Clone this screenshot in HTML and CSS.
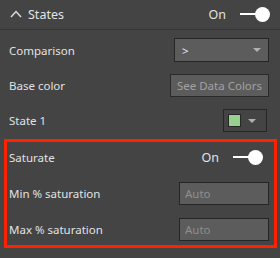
FILE: index.html
```html
<!DOCTYPE html>
<html lang="en">
<head>
    <meta charset="UTF-8">
    <title>States</title>
    <link rel="stylesheet" href="styles.css">
</head>
<body>
    <div class="panel">
        <div class="header">
            <div class="header-title">
                <svg class="caret" width="12" height="8" viewBox="0 0 12 8">
                    <path d="M1 7 L6 1.5 L11 7" fill="none" stroke="#e0e0e0" stroke-width="1.4"/>
                </svg>
                <span>States</span>
            </div>
            <div class="toggle">
                <span class="toggle-label">On</span>
                <span class="toggle-track"></span>
                <span class="toggle-knob"></span>
            </div>
        </div>

        <div class="row row-first">
            <span class="label">Comparison</span>
            <div class="select">
                <span>&gt;</span>
                <span class="arrow"></span>
            </div>
        </div>

        <div class="row row-short">
            <span class="label">Base color</span>
            <button class="btn">See Data Colors</button>
        </div>

        <div class="row row-short">
            <span class="label">State 1</span>
            <div class="picker">
                <span class="swatch"></span>
                <span class="arrow"></span>
            </div>
        </div>

        <div class="highlight">
            <div class="row row-tight">
                <span class="label">Saturate</span>
                <div class="toggle toggle-inner">
                    <span class="toggle-label">On</span>
                    <span class="toggle-track"></span>
                    <span class="toggle-knob"></span>
                </div>
            </div>
            <div class="row row-tight">
                <span class="label">Min % saturation</span>
                <input class="field" type="text" placeholder="Auto">
            </div>
            <div class="row row-tight">
                <span class="label">Max % saturation</span>
                <input class="field" type="text" placeholder="Auto">
            </div>
        </div>
    </div>
</body>
</html>
```

FILE: styles.css
```css
* {
    box-sizing: border-box;
    margin: 0;
    padding: 0;
}

body {
    background-color: #444444;
    color: #e2e2e2;
    font-family: 'Noto Sans', 'Open Sans', sans-serif;
    font-size: 11.5px;
    width: 280px;
    height: 258px;
    overflow: hidden;
}

.header {
    height: 30px;
    border-bottom: 1px solid #363636;
    display: flex;
    align-items: center;
    justify-content: space-between;
    padding: 0 10px 1px 10px;
}

.header-title {
    display: flex;
    align-items: center;
    gap: 6px;
    font-size: 12.5px;
}

.caret {
    display: block;
}

.toggle {
    display: flex;
    align-items: center;
}

.toggle-label {
    font-size: 12.5px;
    margin-right: 14px;
}

.toggle-track {
    width: 17px;
    height: 2px;
    background-color: #ffffff;
}

.toggle-knob {
    width: 15px;
    height: 15px;
    border-radius: 50%;
    background-color: #ffffff;
    margin-left: -2px;
}

.row {
    height: 36px;
    display: flex;
    align-items: center;
    justify-content: space-between;
    padding: 0 11px 0 9px;
}

.row-first {
    margin-top: 2px;
}

.row-short {
    height: 35px;
}

.select {
    width: 95px;
    height: 24px;
    background-color: #5c5c5c;
    border: 1px solid #262626;
    display: flex;
    align-items: center;
    justify-content: space-between;
    padding: 0 7px 0 7px;
    color: #eeeeee;
}

.arrow {
    width: 0;
    height: 0;
    border-left: 4px solid transparent;
    border-right: 4px solid transparent;
    border-top: 4px solid #b0b0b0;
}

.btn {
    width: 99px;
    height: 23px;
    background-color: #5c5c5c;
    border: 1px solid #2a2a2a;
    color: #a2a2a2;
    font-family: inherit;
    font-size: 11.5px;
    padding: 0;
}

.picker {
    width: 44px;
    height: 23px;
    border: 1px solid #262626;
    display: flex;
    align-items: center;
    gap: 7px;
    padding-left: 4px;
    margin-right: 2px;
}

.swatch {
    width: 13px;
    height: 13px;
    background-color: #98d08f;
    border: 1px solid #262626;
}

.highlight {
    margin: 2px 3px 0 4px;
    height: 109px;
    outline: 3px solid #ff2200;
    outline-offset: -3px;
}

.row-tight {
    padding: 0 0 0 5px;
}

.row-tight:first-child {
    margin-top: -1px;
}

.toggle-inner {
    margin-right: 14px;
}

.field {
    width: 90px;
    height: 23px;
    margin-right: 8px;
    background-color: #5c5c5c;
    border: 1px solid #262626;
    color: #e2e2e2;
    font-family: inherit;
    font-size: 11.5px;
    padding: 0 5px;
}

.field::placeholder {
    color: #8e8e8e;
}
```
